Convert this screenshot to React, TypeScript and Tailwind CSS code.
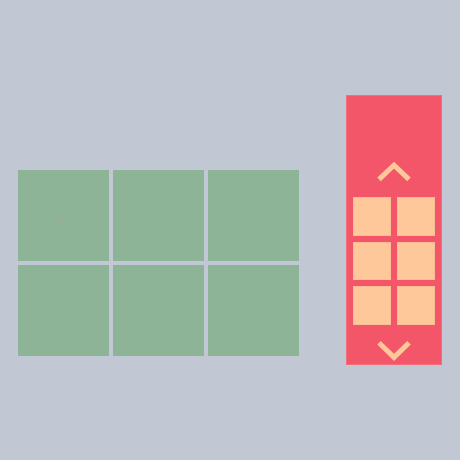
const tiles = [0, 1, 2, 3, 4, 5];

function Chevron({ down }: { down?: boolean }) {
  const pts = down ? "2,3.8 17,18.4 32,3.8" : "2,19.4 17,5.2 32,19.4";
  return (
    <svg width="34" height="22" viewBox="0 0 34 22" className="block">
      <polyline points={pts} fill="none" stroke="#fec89b" strokeWidth="5" strokeLinejoin="miter" />
    </svg>
  );
}

export default function App() {
  return (
    <div className="w-[460px] h-[460px] bg-[#c1c8d3] flex items-start">
      <div className="ml-[18px] mt-[170px] grid grid-cols-[repeat(3,91px)] grid-rows-[repeat(2,91px)] gap-[4px]">
        {tiles.map((i) => (
          <div key={i} className="relative bg-[#8eb497]">
            {i === 0 && <div className="absolute left-[42px] top-[48px] w-[2px] h-[1px] bg-[#c98e84]" />}
          </div>
        ))}
      </div>
      <div className="ml-[47px] mt-[95px] w-[96px] h-[270px] bg-[#f25668] border border-[#f36e7b] flex flex-col items-center pt-[64px]">
        <Chevron />
        <div className="mt-[15px] grid grid-cols-[repeat(2,38px)] grid-rows-[repeat(3,38.5px)] gap-x-[6px] gap-y-[6px]">
          {tiles.map((i) => (
            <div key={i} className="bg-[#fec89b] border border-[#fcbd95]" />
          ))}
        </div>
        <div className="mt-[14px]">
          <Chevron down />
        </div>
      </div>
    </div>
  );
}
